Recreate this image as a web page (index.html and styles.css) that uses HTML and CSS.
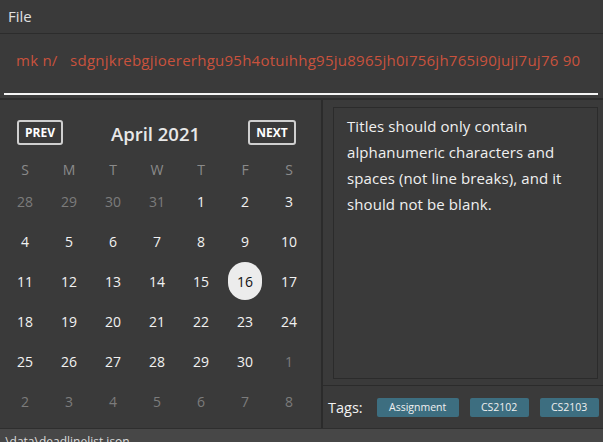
FILE: index.html
```html
<!DOCTYPE html>
<html>
<head>
<meta charset="utf-8">
<link rel="stylesheet" href="styles.css">
</head>
<body>
<div class="app">
  <div class="menubar"><span class="menu-item">File</span></div>
  <div class="command">
    <div class="command-text">mk n/&nbsp;&nbsp;&nbsp;sdgnjkrebgjioererhgu95h4otuihhg95ju8965jh0i756jh765i90juji7uj76 90</div>
    <div class="command-line"></div>
  </div>
  <div class="main">
    <div class="calendar">
      <div class="cal-head">
        <span class="nav-btn">PREV</span>
        <span class="month">April 2021</span>
        <span class="nav-btn">NEXT</span>
      </div>
      <div class="grid">
        <span class="dow">S</span><span class="dow">M</span><span class="dow">T</span><span class="dow">W</span><span class="dow">T</span><span class="dow">F</span><span class="dow">S</span>
        <span class="day out">28</span><span class="day out">29</span><span class="day out">30</span><span class="day out">31</span><span class="day">1</span><span class="day">2</span><span class="day">3</span>
        <span class="day">4</span><span class="day">5</span><span class="day">6</span><span class="day">7</span><span class="day">8</span><span class="day">9</span><span class="day">10</span>
        <span class="day">11</span><span class="day">12</span><span class="day">13</span><span class="day">14</span><span class="day">15</span><span class="day"><span class="today">16</span></span><span class="day">17</span>
        <span class="day">18</span><span class="day">19</span><span class="day">20</span><span class="day">21</span><span class="day">22</span><span class="day">23</span><span class="day">24</span>
        <span class="day">25</span><span class="day">26</span><span class="day">27</span><span class="day">28</span><span class="day">29</span><span class="day">30</span><span class="day out">1</span>
        <span class="day out">2</span><span class="day out">3</span><span class="day out">4</span><span class="day out">5</span><span class="day out">6</span><span class="day out">7</span><span class="day out">8</span>
      </div>
    </div>
    <div class="divider"></div>
    <div class="side">
      <div class="result-wrap">
        <div class="result">Titles should only contain alphanumeric characters and spaces (not line breaks), and it should not be blank.</div>
      </div>
      <div class="tags">
        <span class="tags-label">Tags:</span>
        <span class="tag">Assignment</span>
        <span class="tag">CS2102</span>
        <span class="tag">CS2103</span>
      </div>
    </div>
  </div>
  <div class="status">.\data\deadlinelist.json</div>
</div>
</body>
</html>
```

FILE: styles.css
```css
html, body {
  margin: 0;
  padding: 0;
  background: #3a3a3a;
}
.app {
  width: 603px;
  height: 442px;
  overflow: hidden;
  display: flex;
  flex-direction: column;
  font-family: "Open Sans", "Noto Sans", sans-serif;
  background: #3a3a3a;
}
.menubar {
  height: 33px;
  flex: none;
  border-bottom: 1px solid #2c2c2c;
  display: flex;
  align-items: center;
  padding-left: 8px;
}
.menu-item {
  color: #e0e0e0;
  font-size: 15px;
  margin-top: -2px;
}
.command {
  height: 66px;
  flex: none;
  display: flex;
  flex-direction: column;
  border-bottom: 2px solid #2c2c2c;
  box-sizing: border-box;
}
.command-text {
  color: #c9523d;
  font-size: 15px;
  padding: 16px 0 0 16px;
  height: 42px;
  box-sizing: border-box;
  white-space: nowrap;
  letter-spacing: 0.25px;
}
.command-line {
  margin: 17px 5px 0 4px;
  height: 2px;
  background: #f4f4f4;
}
.main {
  flex: 1;
  display: flex;
  min-height: 0;
}
.calendar {
  width: 321px;
  padding: 19px 0 0 3px;
  box-sizing: border-box;
}
.cal-head {
  display: flex;
  align-items: center;
  justify-content: space-between;
  padding: 0 25px 0 14px;
  height: 26px;
}
.nav-btn {
  border: 2px solid #cfcfcf;
  border-radius: 3px;
  color: #ffffff;
  font-weight: 700;
  font-size: 12px;
  height: 21px;
  line-height: 21px;
  width: 42px;
  text-align: center;
}
.nav-btn + .month + .nav-btn { width: 44px; }
.month {
  color: #e8e8e8;
  font-size: 18.5px;
  font-weight: 600;
  margin-top: 3px;
}
.grid {
  display: grid;
  grid-template-columns: repeat(7, 44px);
  grid-template-rows: 23px;
  grid-auto-rows: 40px;
  margin-top: 13px;
}
.dow {
  color: #8a8a8a;
  font-size: 14px;
  display: flex;
  align-items: center;
  justify-content: center;
}
.day {
  color: #f2f2f2;
  font-size: 14px;
  display: flex;
  align-items: center;
  justify-content: center;
}
.day.out { color: #7c7c7c; }
.today {
  width: 34px;
  height: 38px;
  border-radius: 17px;
  background: #ececec;
  color: #111111;
  display: flex;
  align-items: center;
  justify-content: center;
}
.divider {
  width: 2px;
  background: #2b2b2b;
}
.side {
  flex: 1;
  display: flex;
  flex-direction: column;
}
.result-wrap {
  height: 286px;
  flex: none;
  border-bottom: 1px solid #2b2b2b;
  padding: 7px 5px 6px 10px;
  box-sizing: border-box;
}
.result {
  height: 100%;
  box-sizing: border-box;
  border: 1px solid #2b2b2b;
  color: #f0f0f0;
  font-size: 15px;
  letter-spacing: 0.1px;
  line-height: 26px;
  padding: 5px 8px 0 13px;
}
.tags {
  flex: 1;
  display: flex;
  align-items: center;
  padding-left: 5px;
}
.tags-label {
  color: #f2f2f2;
  font-size: 14.5px;
  margin-right: 14px;
}
.tag {
  background: #3d6e80;
  color: #f0f0f0;
  font-size: 10.5px;
  height: 19px;
  line-height: 19px;
  border-radius: 2px;
  text-align: center;
  margin-right: 11px;
}
.tag:nth-child(2) { width: 82px; }
.tag:nth-child(3) { width: 59px; }
.tag:nth-child(4) { width: 59px; margin-right: 0; }
.status {
  height: 13px;
  flex: none;
  background: #474747;
  border-top: 1px solid #2e2e2e;
  color: #dddddd;
  font-size: 12px;
  line-height: 26px;
  padding-left: 2px;
  overflow: hidden;
  white-space: nowrap;
}
```
